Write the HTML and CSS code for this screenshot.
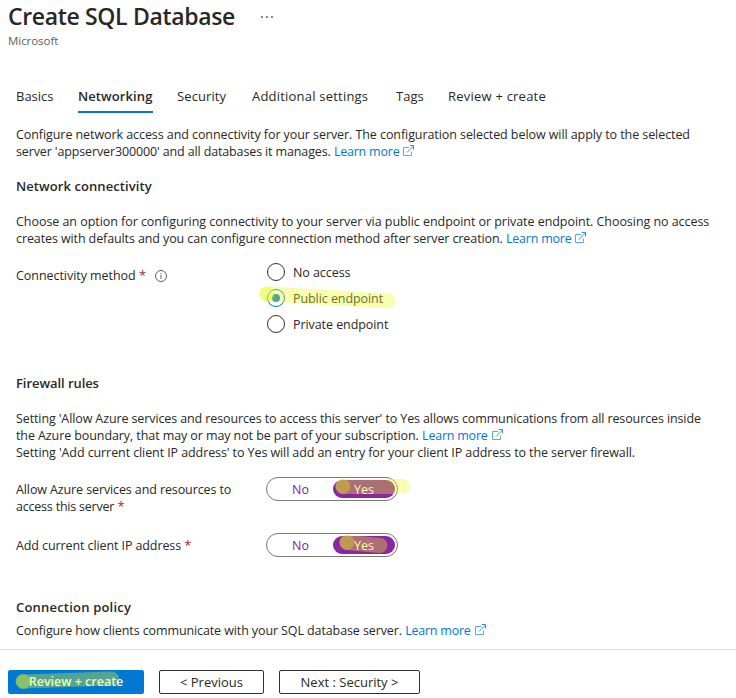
FILE: index.html
```html
<!DOCTYPE html>
<html lang="en">
<head>
<meta charset="utf-8">
<title>Create SQL Database</title>
<link rel="stylesheet" href="styles.css">
</head>
<body>
<svg class="defs" width="0" height="0" aria-hidden="true">
  <symbol id="ext" viewBox="0 0 12 12">
    <path d="M6 2.5H0.5V10.5H8.5V6.5" fill="none" stroke="#5aa9e6"/>
    <path d="M4 7.5L10.4 1.1M7 0.5H10.5V4.5" fill="none" stroke="#2b8fdd"/>
  </symbol>
</svg>

<header class="page-header">
  <div class="title-row">
    <h1 class="title">Create SQL Database</h1>
    <span class="more"><i></i><i></i><i></i></span>
  </div>
  <div class="publisher">Microsoft</div>
</header>

<nav class="tabs">
  <a class="tab tab-basics">Basics</a>
  <a class="tab tab-networking active">Networking</a>
  <a class="tab tab-security">Security</a>
  <a class="tab tab-additional">Additional settings</a>
  <a class="tab tab-tags">Tags</a>
  <a class="tab tab-review">Review + create</a>
</nav>

<main class="content">
  <div class="para intro">
    <div class="line ls-intro1">Configure network access and connectivity for your server. The configuration selected below will apply to the selected</div>
    <div class="line"><span class="ls-intro2">server 'appserver300000' and all databases it manages.</span> <a class="link">Learn more</a><svg class="ext"><use href="#ext"/></svg></div>
  </div>

  <h2 class="heading h-network">Network connectivity</h2>
  <div class="para">
    <div class="line ls-net1">Choose an option for configuring connectivity to your server via public endpoint or private endpoint. Choosing no access</div>
    <div class="line"><span class="ls-net2">creates with defaults and you can configure connection method after server creation.</span> <a class="link">Learn more</a><svg class="ext"><use href="#ext"/></svg></div>
  </div>

  <div class="field connectivity">
    <div class="label"><span class="ls-method">Connectivity method</span> <span class="req">*</span>
      <svg class="info" viewBox="0 0 12 12"><circle cx="6" cy="6" r="5.5" fill="none" stroke="#605e5c"/><path d="M6 5V9M6 3V4" stroke="#605e5c"/></svg>
    </div>
    <div class="radios">
      <div class="radio"><span class="circle"></span>No access</div>
      <div class="radio"><span class="circle checked"></span>Public endpoint
        <svg class="mark mark-radio" viewBox="0 0 140 28"><path d="M9 10L130 17" stroke-width="15"/><circle cx="9" cy="10" r="7.5"/></svg>
      </div>
      <div class="radio"><span class="circle"></span>Private endpoint</div>
    </div>
  </div>

  <h2 class="heading h-firewall">Firewall rules</h2>
  <div class="para">
    <div class="line ls-fw1">Setting 'Allow Azure services and resources to access this server' to Yes allows communications from all resources inside</div>
    <div class="line"><span class="ls-fw2">the Azure boundary, that may or may not be part of your subscription.</span> <a class="link">Learn more</a><svg class="ext"><use href="#ext"/></svg></div>
    <div class="line ls-fw3">Setting 'Add current client IP address' to Yes will add an entry for your client IP address to the server firewall.</div>
  </div>

  <div class="field allow">
    <div class="label"><div class="ls-allow1">Allow Azure services and resources to</div><div><span class="ls-allow2">access this server</span> <span class="req">*</span></div></div>
    <div class="toggle"><span class="no">No</span><span class="yes">Yes</span>
      <svg class="mark mark-toggle" viewBox="0 0 90 24"><path d="M16 10.5H75.5" stroke-width="15"/><circle class="deep" cx="16" cy="10.5" r="7.5"/></svg>
    </div>
  </div>
  <div class="field client">
    <div class="label"><span class="ls-client">Add current client IP address</span> <span class="req">*</span></div>
    <div class="toggle"><span class="no">No</span><span class="yes">Yes</span>
      <svg class="mark mark-toggle" viewBox="0 0 90 24"><path d="M20 10.5L53 13.5" stroke-width="15"/><circle class="deep" cx="20" cy="10.5" r="7.5"/></svg>
    </div>
  </div>

  <h2 class="heading h-policy">Connection policy</h2>
  <div class="line policy"><span class="ls-policy">Configure how clients communicate with your SQL database server.</span> <a class="link">Learn more</a><svg class="ext"><use href="#ext"/></svg></div>
</main>

<footer class="footer">
  <button class="btn primary">Review + create
    <svg class="mark mark-btn" viewBox="0 0 110 24"><path d="M8 13.5L97 10.5" stroke-width="14"/><circle cx="8" cy="13.5" r="7.5"/></svg>
  </button>
  <button class="btn prev">&lt; Previous</button>
  <button class="btn next">Next : Security &gt;</button>
</footer>
</body>
</html>
```
FILE: styles.css
```css
* { box-sizing: border-box; }
body {
  margin: 0;
  height: 698px;
  overflow: hidden;
  display: flex;
  flex-direction: column;
  background: #fff;
  color: #292827;
  font: 12.5px/17px "Open Sans", "Noto Sans", sans-serif;
  white-space: nowrap;
}
.defs { position: absolute; }

.page-header { height: 84px; padding: 0 8px; }
.title-row { display: flex; height: 33px; }
.title { margin: 0; font-size: 23px; line-height: 33px; font-weight: 600; letter-spacing: -0.34px; }
.more { display: flex; gap: 3px; margin: 16px 0 0 26px; }
.more i { width: 2px; height: 2px; background: #8a8886; }
.publisher { font-size: 11.5px; line-height: 16px; letter-spacing: -0.05px; color: #605e5c; }

.tabs { display: flex; height: 29px; padding-left: 16px; font-size: 13px; line-height: 25px; }
.tab { height: 29px; }
.tab-basics { width: 62px; }
.tab-networking { width: 75px; margin-right: 24px; letter-spacing: 0.1px; }
.tab-security { width: 75px; letter-spacing: 0.1px; }
.tab-additional { width: 144px; letter-spacing: 0.21px; }
.tab-tags { width: 52px; }
.tab-review { letter-spacing: 0.22px; }
.active { font-weight: 600; border-bottom: 2px solid #0078d4; }

.content { padding: 0 16px; height: 536px; }
.line { height: 17px; }
.intro { margin-top: 13px; }
.heading { margin: 0; font-size: 13px; line-height: 17px; font-weight: 600; }
.h-network { margin: 18px 0; letter-spacing: 0.08px; }
.h-firewall { margin: 38px 0 18px; letter-spacing: -0.06px; }
.h-policy { margin: 42px 0 6px; letter-spacing: 0.2px; }
.link { color: #0078d4; letter-spacing: -0.22px; }
.ext { width: 12px; height: 12px; margin-left: 4px; vertical-align: -1px; }
.ls-intro1 { letter-spacing: -0.074px; }
.ls-intro2 { letter-spacing: -0.133px; }
.ls-net1 { letter-spacing: -0.05px; }
.ls-net2 { letter-spacing: -0.105px; }
.ls-method { letter-spacing: -0.05px; }
.ls-fw1 { letter-spacing: -0.112px; }
.ls-fw2 { letter-spacing: -0.09px; }
.ls-fw3 { letter-spacing: -0.092px; }
.ls-allow1 { letter-spacing: -0.11px; }
.ls-allow2 { letter-spacing: -0.21px; }
.ls-client { letter-spacing: -0.1px; }
.ls-policy { letter-spacing: -0.107px; }

.field { display: flex; }
.label { width: 250px; }
.req { color: #a4262c; font-size: 13px; }
.connectivity { margin-top: 12px; }
.connectivity .label { padding-top: 8px; }
.info { width: 12px; height: 12px; margin-left: 6px; vertical-align: -2px; }
.radio { position: relative; display: flex; align-items: center; gap: 8px; height: 26px; padding-left: 1px; letter-spacing: -0.07px; }
.circle { display: flex; width: 18px; height: 18px; border: 1px solid #323130; border-radius: 50%; }
.checked { border-color: #0078d4; }
.checked::before { content: ""; width: 8px; height: 8px; margin: auto; border-radius: 50%; background: #0078d4; }

.mark { position: absolute; overflow: visible; pointer-events: none; }
.mark path { stroke: #ecf81e; stroke-opacity: .35; stroke-linecap: round; fill: none; }
.mark circle { fill: #ecf81e; fill-opacity: .35; }
.mark .deep { fill: #d3d227; fill-opacity: .45; }
.mark-radio { left: -8px; top: -1px; width: 140px; height: 28px; }
.mark-toggle { left: 60px; top: -2px; width: 90px; height: 24px; }
.mark-btn { left: 6px; top: -3px; width: 110px; height: 24px; }

.allow { margin-top: 16px; }
.allow .label { padding-top: 4px; }
.client { margin-top: 18px; }
.client .label { padding-top: 4px; }
.toggle {
  position: relative;
  display: flex;
  width: 132px;
  height: 24px;
  padding: 2px;
  border: 1px solid #7a7876;
  border-radius: 12px;
  line-height: 19px;
  text-align: center;
  color: #881798;
}
.no { width: 64px; padding-right: 1px; line-height: 20px; }
.yes { width: 62px; height: 18px; border-radius: 9px; background: #8a26a4; color: #fff; }

.footer { display: flex; height: 49px; padding: 20px 8px 0; border-top: 1px solid #dfdedd; }
.btn {
  position: relative;
  height: 24px;
  padding: 0 0 1px;
  border: 1px solid #323130;
  border-radius: 2px;
  background: #fff;
  color: #292827;
  font: 13px/20px "Open Sans", "Noto Sans", sans-serif;
}
.primary { width: 136px; border-color: #0078d4; background: #0078d4; color: #fff; font-size: 12.5px; font-weight: 600; }
.prev { width: 105px; margin-left: 15px; }
.next { width: 141px; margin-left: 15px; }
```
